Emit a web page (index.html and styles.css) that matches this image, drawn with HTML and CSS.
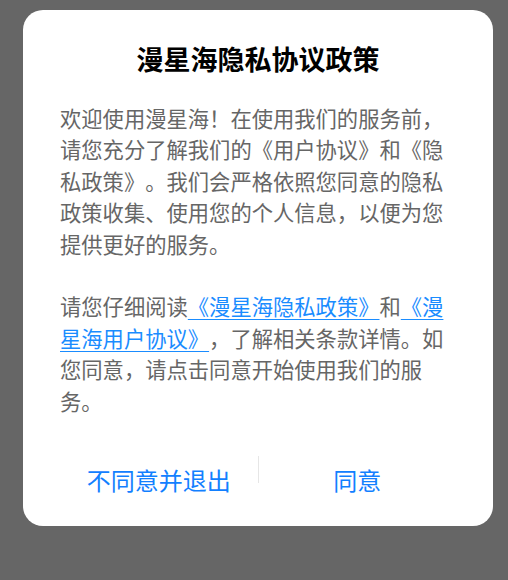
FILE: index.html
```html
<!DOCTYPE html>
<html lang="zh-CN">
<head>
<meta charset="utf-8">
<link rel="stylesheet" href="styles.css">
</head>
<body>
<div class="screen">
  <div class="dialog">
    <h1 class="title">漫星海隐私协议政策</h1>
    <div class="content">
      <p class="para">欢迎使用漫星海！在使用我们的服务前，请您充分了解我们的《用户协议》和《隐私政策》。我们会严格依照您同意的隐私政策收集、使用您的个人信息，以便为您提供更好的服务。</p>
      <p class="para">请您仔细阅读<a class="link" href="#">《漫星海隐私政策》</a>和<a class="link" href="#">《漫星海用户协议》</a>，了解相关条款详情。如您同意，请点击同意开始使用我们的服务。</p>
    </div>
    <div class="actions">
      <button class="btn">不同意并退出</button>
      <span class="divider"></span>
      <button class="btn">同意</button>
    </div>
  </div>
</div>
</body>
</html>
```
FILE: styles.css
```css
* { box-sizing: border-box; }
html, body {
  margin: 0;
  padding: 0;
  background: #666666;
  font-family: "Noto Sans CJK SC", "Noto Sans", sans-serif;
}
.screen {
  width: 508px;
  height: 580px;
  padding: 10px 15px 0 23px;
}
.dialog {
  width: 470px;
  height: 516px;
  background: #ffffff;
  border-radius: 20px;
  padding: 33px 37px 0 37px;
  display: flex;
  flex-direction: column;
}
.title {
  margin: 0;
  font-size: 27px;
  line-height: 32px;
  font-weight: 700;
  color: #000000;
  text-align: center;
  text-spacing-trim: space-all;
}
.content {
  margin-top: 27px;
  color: #666666;
  font-size: 21.3px;
  line-height: 31.4px;
  text-spacing-trim: space-all;
  line-break: normal;
}
.para {
  margin: 0;
}
.para + .para {
  margin-top: 31.4px;
}
.link {
  color: #1a8cff;
  text-decoration: underline;
  text-underline-offset: 4px;
  text-decoration-thickness: 1px;
}
.actions {
  margin-top: 40px;
  display: flex;
  align-items: flex-start;
}
.btn {
  flex: 1;
  background: none;
  border: 0;
  padding: 0;
  font-family: inherit;
  font-size: 24px;
  line-height: 36px;
  color: #1280ff;
  margin-top: 6px;
}
.divider {
  width: 1px;
  height: 27px;
  background: #e6e6e6;
}
```
